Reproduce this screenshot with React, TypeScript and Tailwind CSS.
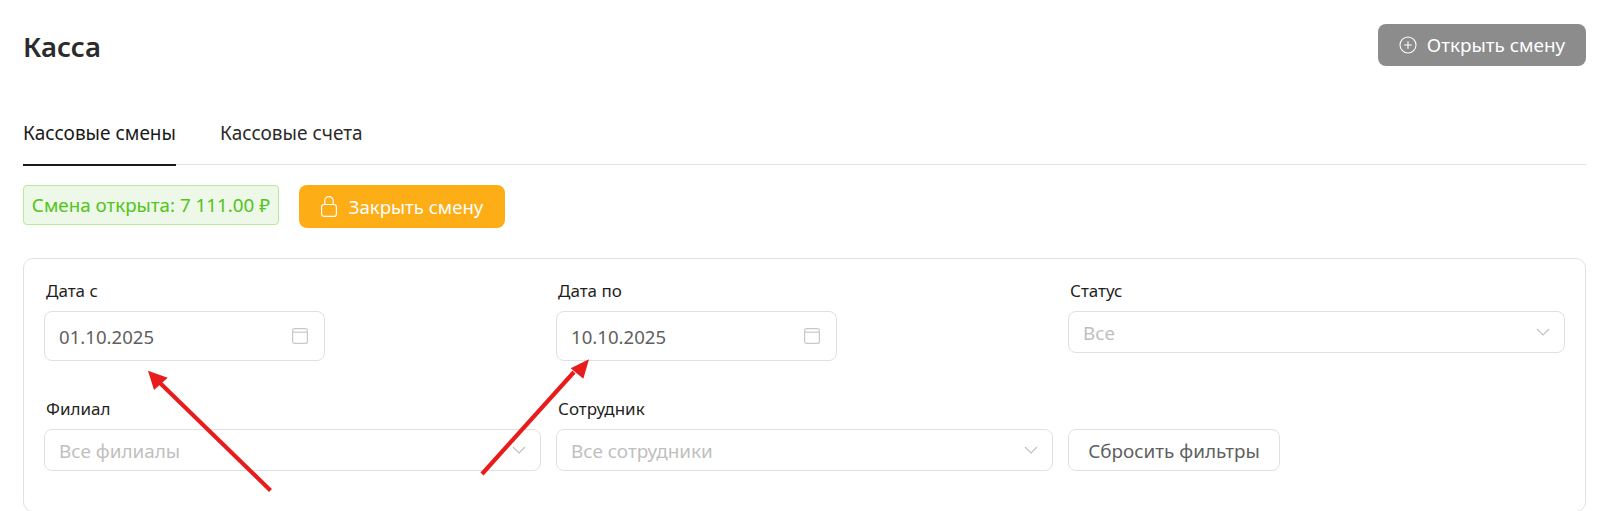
import React from "react";

const Cal = () => (
  <svg width="16" height="16" viewBox="0 0 16 16" fill="none" stroke="#c9c9c9" strokeWidth="1.2">
    <rect x="0.6" y="0.6" width="14.8" height="14.8" rx="2" />
    <path d="M0.6 4.2h14.8" />
  </svg>
);

const Chev = () => (
  <svg width="14" height="8" viewBox="0 0 14 8" fill="none" stroke="#bfbfbf" strokeWidth="1.1">
    <path d="M1 1l6 6 6-6" />
  </svg>
);

const Label = ({ children }: { children: React.ReactNode }) => (
  <div className="h-[22px] pl-[2px] pt-[1px] text-[17px] leading-[22px] text-[#1f1f1f]">{children}</div>
);

const DateField = ({ label, value }: { label: string; value: string }) => (
  <div>
    <Label>{label}</Label>
    <div className="mt-[10px] flex h-[50px] w-[281px] items-center justify-between rounded-lg border border-[#e0e0e0] pl-[14px] pr-[16px]">
      <span className="pt-[2px] text-[18.6px] text-[#5f5f5f]">{value}</span>
      <Cal />
    </div>
  </div>
);

const SelectBox = ({ value }: { value: string }) => (
  <div className="mt-[10px] flex h-[42px] items-center justify-between rounded-lg border border-[#e0e0e0] pl-[14px] pr-[14px]">
    <span className="pt-[2px] text-[18.9px] text-[#bfbfbf]">{value}</span>
    <Chev />
  </div>
);

const SelectField = ({ label, value }: { label: string; value: string }) => (
  <div>
    <Label>{label}</Label>
    <SelectBox value={value} />
  </div>
);

export default function App() {
  return (
    <div className="relative h-[511px] overflow-hidden bg-white pl-[23px] pr-[20px] pt-[24px] font-['Noto_Sans',sans-serif]">
      <div className="flex h-[42px] items-center justify-between">
        <h1 className="pt-[4px] text-[27.5px] font-semibold text-[#2b2b2b]">Касса</h1>
        <button className="flex h-[42px] w-[208px] items-center justify-center gap-[10px] rounded-lg bg-[#8c8c8c] text-[18.9px] text-white">
          <svg width="18" height="18" viewBox="0 0 18 18" fill="none" stroke="#fff" strokeWidth="1.1">
            <circle cx="9" cy="9" r="8" />
            <path d="M9 5.2v7.6M5.2 9h7.6" />
          </svg>
          Открыть смену
        </button>
      </div>

      <div className="mt-[46px] flex h-[53px] gap-[44px] border-b border-[#e2e2e2]">
        <div className="relative flex h-[53px] items-center pb-[10px] text-[19px] text-[#1a1a1a]">
          Кассовые смены
          <div className="absolute -bottom-px left-0 right-0 h-[2px] bg-[#1a1a1a]" />
        </div>
        <div className="flex h-[53px] items-center pb-[10px] text-[19px] text-[#2b2b2b]">Кассовые счета</div>
      </div>

      <div className="mt-[20px] flex items-start gap-[20px]">
        <div className="flex h-[40px] w-[256px] items-center justify-center rounded-[4px] border border-[#b7eb8f] bg-[#edf8e8] text-[18.8px] text-[#52c41a]">
          Смена открыта: 7 111.00 ₽
        </div>
        <button className="flex h-[43px] w-[206px] items-center justify-center gap-[12px] rounded-lg bg-[#fdad15] text-[18.6px] text-white">
          <svg width="16" height="21" viewBox="0 0 16 21" fill="none" stroke="#fff" strokeWidth="1.2">
            <rect x="0.6" y="8.5" width="14.8" height="11.9" rx="2.5" />
            <path d="M3.8 8.5V4.8a4.2 4.2 0 0 1 8.4 0V8.5" />
          </svg>
          Закрыть смену
        </button>
      </div>

      <div className="mt-[30px] h-[254px] rounded-[10px] border border-[#e2e2e2] px-[20px] pt-[20px]">
        <div className="grid grid-cols-3 gap-x-[15px]">
          <div className="h-[118px]"><DateField label="Дата с" value="01.10.2025" /></div>
          <div className="h-[118px]"><DateField label="Дата по" value="10.10.2025" /></div>
          <div className="h-[118px]"><SelectField label="Статус" value="Все" /></div>
          <SelectField label="Филиал" value="Все филиалы" />
          <SelectField label="Сотрудник" value="Все сотрудники" />
          <div className="pt-[32px]">
            <button className="flex h-[42px] w-[212px] items-center justify-center rounded-lg border border-[#e0e0e0] pt-[2px] text-[18.9px] text-[#5f5f5f]">
              Сбросить фильтры
            </button>
          </div>
        </div>
      </div>

      <svg className="pointer-events-none absolute left-0 top-0" width="1606" height="511" fill="#e81c1c" stroke="none">
        <path d="M270.5 490.5L159 382" stroke="#e81c1c" strokeWidth="4.2" />
        <path d="M148 370.7L167.7 377.7L154 390Z" />
        <path d="M482 474L574 372" stroke="#e81c1c" strokeWidth="4.2" />
        <path d="M589 359.3L570.7 368.3L583.3 378.7Z" />
      </svg>
    </div>
  );
}
